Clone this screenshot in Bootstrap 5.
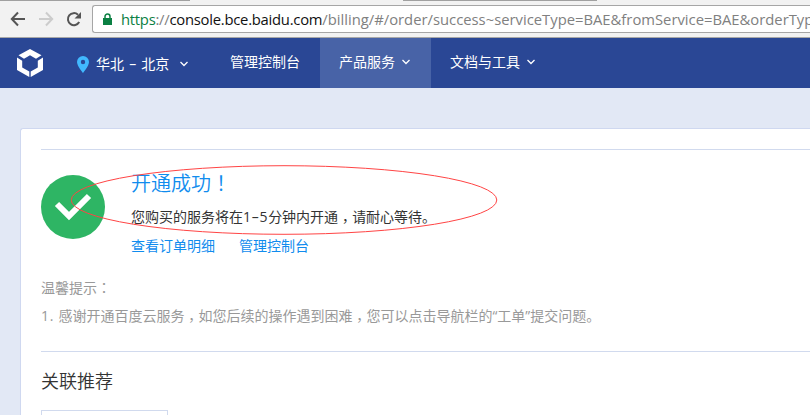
<!DOCTYPE html>
<html lang="zh-CN">
<head>
<meta charset="utf-8">
<meta name="viewport" content="width=device-width, initial-scale=1">
<title>开通成功</title>
<link href="https://cdn.jsdelivr.net/npm/bootstrap@5.3.0/dist/css/bootstrap.min.css" rel="stylesheet">
<style>
html{overflow:hidden}
body{width:810px;height:415px;overflow:hidden;background:#e2e8f5;font:14px/20px "Open Sans","Noto Sans CJK SC",sans-serif;color:#333}
svg{display:block;flex:none}
.browser-bar{height:38px;background:#f2f2f2;border-bottom:1px solid #a8a8a8;overflow:hidden}
.tab-edge{height:1px}
.tab-edge i{height:1px;background:#a0a0a0}
.tools{padding:4px 0 0 10px;height:37px}
.address{margin-left:10px;width:718px;height:28px;border:1px solid #a6a6a6;border-right:0;border-radius:3px 0 0 3px;background:#fff;padding-left:10px;white-space:nowrap;color:#808080;overflow:hidden}
.url{font:14.8px/26px "Open Sans",sans-serif;letter-spacing:-.25px;margin-left:9px}
.url-path{letter-spacing:0}
.secure{color:#0b8043}.host{color:#111}
.console-nav{height:50px;background:#2a4795;color:#fff}
.console-nav .entry{height:50px;padding-bottom:3px}
.console-nav .brand{padding:0 0 0 17px;width:77px}
.console-nav .region{width:153px;padding:2px 0 0}
.region-name{margin-left:7px;width:84px;word-spacing:1.5px}
.entry.on{background:#4863a7}
.panel{margin:40px 0 0 20px;width:790px;height:287px;background:#fff;border:1px solid #cfd8f0;border-width:1px 0 0 1px;border-radius:3px 0 0 0;padding:20px 0 0 20px;overflow:hidden}
.rule{height:1px;background:#d1daee}
.result{padding-top:21px;height:119px}
.result-text{margin-left:26px}
.heading-ok{font-size:20px;line-height:26px;color:#108cee;margin:0;font-weight:350}
.msg{margin-top:10px}
.num{letter-spacing:.7px}
.links{margin-top:9px;gap:24px}
.links a{color:#108cee;text-decoration:none}
.tips{color:#999;padding-top:9px;height:82px}
.mid{font-family:"Noto Sans CJK TC",sans-serif;line-height:1}
.comma{position:relative;top:4px}
.related{font-size:18px;line-height:26px;margin:16px 0;font-weight:350}
.product{width:127px;height:60px;border:1px solid #d1daee}
.ring{position:absolute;left:71px;top:164px}
</style>
<script src="https://cdn.jsdelivr.net/npm/bootstrap@5.3.0/dist/js/bootstrap.bundle.min.js"></script>
</head>
<body>
<div class="browser-bar">
  <div class="tab-edge d-flex"><i style="width:190px"></i><i style="width:213px;opacity:0"></i><i style="width:194px"></i></div>
  <div class="tools d-flex">
    <svg width="72" height="28" viewBox="0 0 72 28" fill="none" stroke="#555" stroke-width="2"><path d="M15 14H2M8 7.500 1.800 14 8 20.500"/><path stroke="#ccc" d="M29 14h13M36 7.500 42.200 14 36 20.500"/><path d="M69.200 17A6 6 0 1 1 68 9.700"/><path fill="#555" stroke="none" d="M71 7v6.500h-6.500z"/></svg>
    <div class="address d-flex align-items-center">
      <svg width="9" height="13" viewBox="0 0 9 13"><path fill="#0b8043" d="M0 5h9v7H0z"/><path d="M2 5V3.500a2.500 2.500 0 0 1 5 0V5" fill="none" stroke="#0b8043" stroke-width="1.500"/></svg>
      <span class="url"><span class="secure">https</span>://<span class="host">console.bce.baidu.com</span><span class="url-path">/billing/#/order/success~serviceType=BAE&amp;fromService=BAE&amp;orderTyp</span></span>
    </div>
  </div>
</div>
<nav class="console-nav d-flex">
  <div class="entry brand d-flex align-items-center"><svg width="26" height="28" viewBox="0 0 26 28" fill="#fff"><path d="M13 0 24.500 6.300 19 9.800 13 6.300 7 9.800 1.500 6.300zM0 8.500l5.200 3.300v6.600l7.100 4.200V28L0 21zM26 8.500l-5.200 3.300v6.600l-7.100 4.200V28L26 21z"/></svg></div>
  <div class="entry region d-flex align-items-center"><svg width="12" height="17" viewBox="0 0 12 17"><path fill="#41b9ff" fill-rule="evenodd" d="M6 0a6 6 0 0 0-6 6c0 4 6 11 6 11s6-7 6-11a6 6 0 0 0-6-6zm0 3.800a2.200 2.200 0 1 1 0 4.400 2.200 2.200 0 0 1 0-4.400z"/></svg><span class="region-name">华北 – 北京</span><svg width="8" height="6" viewBox="0 0 8 6" fill="none" stroke="#fff" stroke-width="1.300"><path d="m.5 1 3.500 3.500L7.500 1"/></svg></div>
  <div class="entry d-flex align-items-center pe-3 me-1">管理控制台</div>
  <div class="entry on d-flex align-items-center" style="padding-left:19px;width:111px"><span class="me-1">产品服务</span><svg width="8" height="6" style="margin-left:3px" viewBox="0 0 8 6" fill="none" stroke="#fff" stroke-width="1.300"><path d="m.5 1 3.500 3.500L7.500 1"/></svg></div>
  <div class="entry d-flex align-items-center" style="padding-left:19px"><span class="me-1">文档与工具</span><svg width="8" height="6" style="margin-left:3px" viewBox="0 0 8 6" fill="none" stroke="#fff" stroke-width="1.300"><path d="m.5 1 3.500 3.500L7.500 1"/></svg></div>
</nav>
<main class="panel">
  <div class="rule"></div>
  <section class="result d-flex">
    <svg class="mt-1" width="64" height="64" viewBox="0 0 64 64"><circle cx="32" cy="32" r="32" fill="#2eb564"/><path d="m16 29 12 12 20-20" fill="none" stroke="#fff" stroke-width="6"/></svg>
    <div class="result-text">
      <h1 class="heading-ok">开通成功<span class="mid" lang="zh-TW">！</span></h1>
      <div class="msg">您购买的服务将在<span class="num">1–5</span>分钟内开通<span class="mid comma" lang="zh-TW">，</span>请耐心等待。</div>
      <div class="links d-flex"><a href="#">查看订单明细</a><a href="#">管理控制台</a></div>
    </div>
  </section>
  <section class="tips"><div>温馨提示<span class="mid" lang="zh-TW">：</span></div><div class="mt-2"><span class="num">1. </span>感谢开通百度云服务<span class="mid comma" lang="zh-TW">，</span>如您后续的操作遇到困难<span class="mid comma" lang="zh-TW">，</span>您可以点击导航栏的“工单”提交问题。</div></section>
  <div class="rule"></div>
  <h2 class="related">关联推荐</h2>
  <div class="product"></div>
</main>
<svg class="ring" width="428" height="72" viewBox="0 0 428 72"><ellipse cx="213" cy="36" rx="212.800" ry="34.300" fill="none" stroke="#f44" stroke-width="1"/></svg>
</body>
</html>
